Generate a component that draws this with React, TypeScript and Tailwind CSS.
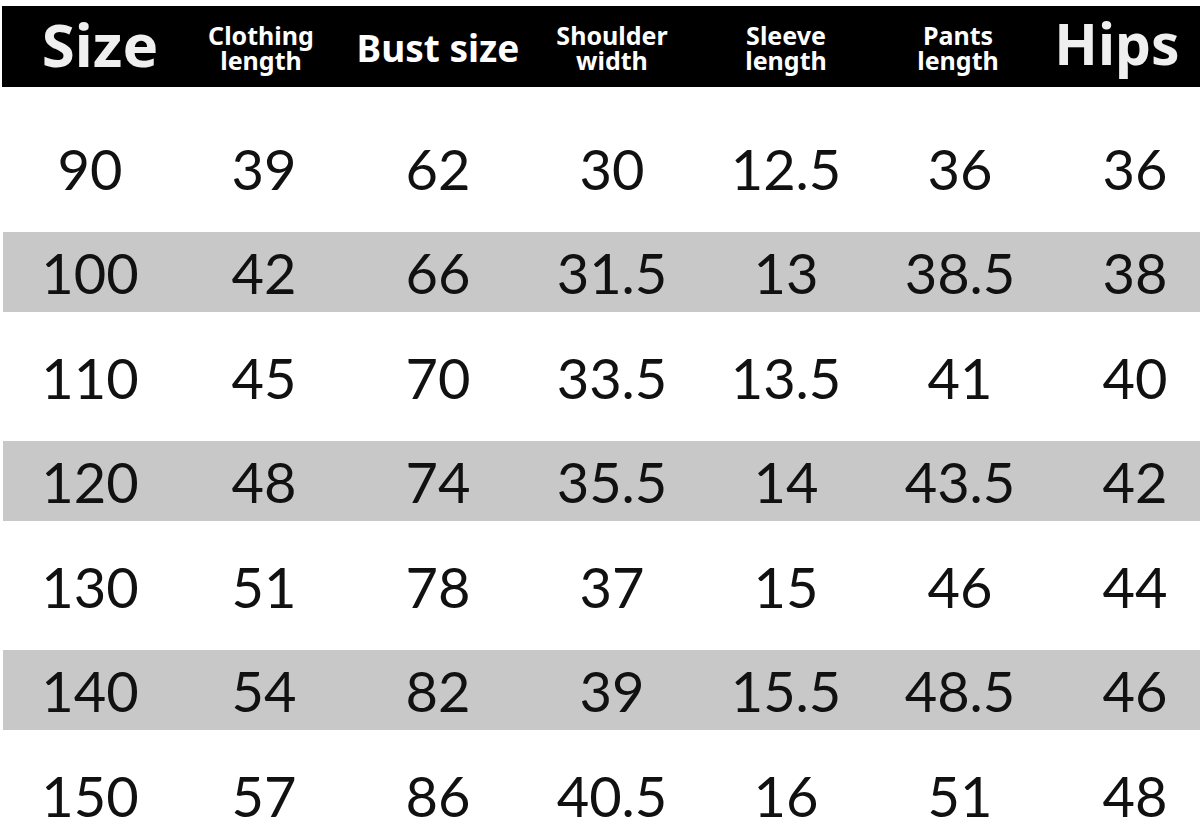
const headers = [
  { label: "Size", big: true, shift: "pl-[20px]" },
  { label: "Clothing\nlength", shift: "pr-[6px]" },
  { label: "Bust size", mid: true, shift: "" },
  { label: "Shoulder\nwidth", shift: "" },
  { label: "Sleeve\nlength", shift: "" },
  { label: "Pants\nlength", shift: "pr-[4px]" },
  { label: "Hips", big: true, shift: "pr-[36px]" },
];

const rows = [
  ["90", "39", "62", "30", "12.5", "36", "36"],
  ["100", "42", "66", "31.5", "13", "38.5", "38"],
  ["110", "45", "70", "33.5", "13.5", "41", "40"],
  ["120", "48", "74", "35.5", "14", "43.5", "42"],
  ["130", "51", "78", "37", "15", "46", "44"],
  ["140", "54", "82", "39", "15.5", "48.5", "46"],
  ["150", "57", "86", "40.5", "16", "51", "48"],
];

const cols = "grid grid-cols-[174px_174px_174px_174px_174px_174px_176px]";

export default function App() {
  return (
    <div className="h-[832px] w-[1200px] overflow-hidden bg-white pt-[6px]">
      <div className={`ml-[2px] h-[81px] bg-black pl-[1px] ${cols} items-center font-['Noto_Sans',sans-serif] font-bold`}>
        {headers.map((h) => (
          <div key={h.label} className={`flex flex-col items-center text-center ${h.shift}`}>
            {h.big ? (
              <span
                className={`leading-none text-[#efefef] -translate-y-[3px] ${
                  h.label === "Hips" ? "text-[57px]" : "text-[60px]"
                }`}
              >
                {h.label}
              </span>
            ) : h.mid ? (
              <span className="whitespace-nowrap text-[37px] leading-none text-white translate-y-[1px]">{h.label}</span>
            ) : (
              <span className="whitespace-pre-line text-[25px] leading-[25px] text-white translate-y-[1px]">{h.label}</span>
            )}
          </div>
        ))}
      </div>

      <div className="pt-[31px]">
        {rows.map((r, i) => (
          <div key={r[0]} className="h-[104.5px] pt-[9px]">
            <div
              className={`ml-[3px] h-[80px] pt-[3px] ${cols} items-center ${
                i % 2 === 1 ? "bg-[#c8c8c8]" : ""
              } font-['Lato',sans-serif] text-[56px] leading-none text-[#111]`}
            >
              {r.map((v, j) => (
                <div key={j} className="text-center">
                  {v}
                </div>
              ))}
            </div>
          </div>
        ))}
      </div>
    </div>
  );
}
